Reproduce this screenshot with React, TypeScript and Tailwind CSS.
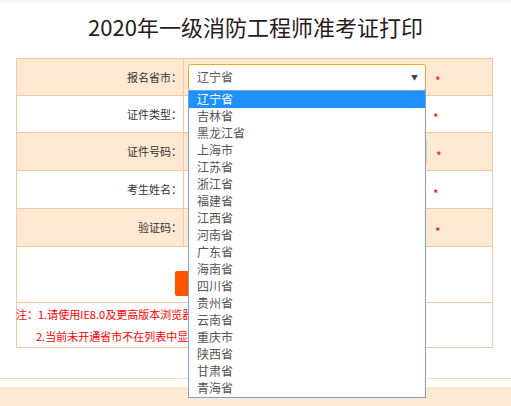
import { ChevronDown } from "lucide-react";

const PROVINCES = [
  "辽宁省",
  "吉林省",
  "黑龙江省",
  "上海市",
  "江苏省",
  "浙江省",
  "福建省",
  "江西省",
  "河南省",
  "广东省",
  "海南省",
  "四川省",
  "贵州省",
  "云南省",
  "重庆市",
  "陕西省",
  "甘肃省",
  "青海省",
];

function Star() {
  return (
    <span className="ml-[9px] mt-[8px] text-[12px] leading-none text-[#ff0000]">*</span>
  );
}

function Row({
  label,
  shaded,
  height,
  children,
}: {
  label: string;
  shaded?: boolean;
  height: string;
  children: React.ReactNode;
}) {
  return (
    <div
      className={`flex border-b border-[#f5c6a1] ${height} ${
        shaded ? "bg-[#fde9d2]" : "bg-white"
      }`}
    >
      <div className="flex w-[167px] items-center justify-end border-r border-[#f5c6a1] pr-[1px] text-[11px] text-[#333]">
        {label}
      </div>
      <div className="flex flex-1 items-center pl-[4px]">{children}</div>
    </div>
  );
}

export default function App() {
  return (
    <div className="relative h-[406px] w-[511px] overflow-hidden bg-white font-['Noto_Sans_CJK_SC',sans-serif]">
      <div className="h-[3px] bg-[#fdf6ee]" />
      <div className="h-[55px] pt-[8px] text-center text-[22px] leading-[30px] text-[#2a1a1a]">
        2020年一级消防工程师准考证打印
      </div>

      <div className="ml-[16px] w-[477px] border-x border-t border-[#f5c6a1]">
        <Row label="报名省市：" shaded height="h-[37px]">
          <div className="relative">
            <div className="flex h-[27px] w-[238px] items-center justify-between rounded-[3px] border border-[#f2a43a] bg-white pl-[8px] pr-[7px] text-[12px] text-[#555]">
              <span>辽宁省</span>
              <span className="text-[7px] leading-none text-[#444]">▼</span>
            </div>
            <ul className="absolute left-0 top-[26px] z-10 w-[238px] border border-[#7f9fd2] bg-white">
              {PROVINCES.map((p, i) => (
                <li
                  key={p}
                  className={`flex h-[17px] items-center pl-[8px] text-[12px] ${
                    i === 0 ? "bg-[#1e90ff] text-white" : "text-[#555]"
                  }`}
                >
                  {p}
                </li>
              ))}
            </ul>
          </div>
          <Star />
        </Row>
        <Row label="证件类型：" height="h-[37px]">
          <div className="flex h-[26px] w-[236px] items-center justify-between rounded-[3px] border border-[#ccc] px-[6px] text-[12px] text-[#555]">
            <span>身份证</span>
            <ChevronDown className="size-3" />
          </div>
          <Star />
        </Row>
        <Row label="证件号码：" shaded height="h-[38px]">
          <div className="h-[27px] w-[239px] rounded-[3px] border border-[#ccc] bg-white" />
          <Star />
        </Row>
        <Row label="考生姓名：" height="h-[38px]">
          <div className="h-[27px] w-[236px] rounded-[3px] border border-[#ccc] bg-white" />
          <Star />
        </Row>
        <Row label="验证码：" shaded height="h-[38px]">
          <div className="flex w-[238px] items-center gap-2">
            <div className="h-[27px] w-[120px] rounded-[3px] border border-[#ccc] bg-white" />
            <div className="h-[27px] w-[80px] bg-[#eee]" />
          </div>
          <Star />
        </Row>

        <div className="flex h-[56px] justify-center border-b border-[#f5c6a1] pt-[24px]">
          <button className="h-[25px] w-[160px] rounded-[2px] bg-[#ff5500] text-[13px] text-white">
            打印准考证
          </button>
        </div>

        <div className="h-[45px] border-b border-[#f5c6a1] text-[11px] leading-[22px] text-[#ff0000]">
          <div className="-ml-[1px]">注：1.请使用IE8.0及更高版本浏览器，否则可能无法正常打印</div>
          <div className="pl-[19px]">2.当前未开通省市不在列表中显示</div>
        </div>
      </div>

      <div className="mt-[30px] h-px bg-[#fadcc3]" />
      <div className="mt-[8px] h-[40px] bg-[#fde9d2]" />
    </div>
  );
}
